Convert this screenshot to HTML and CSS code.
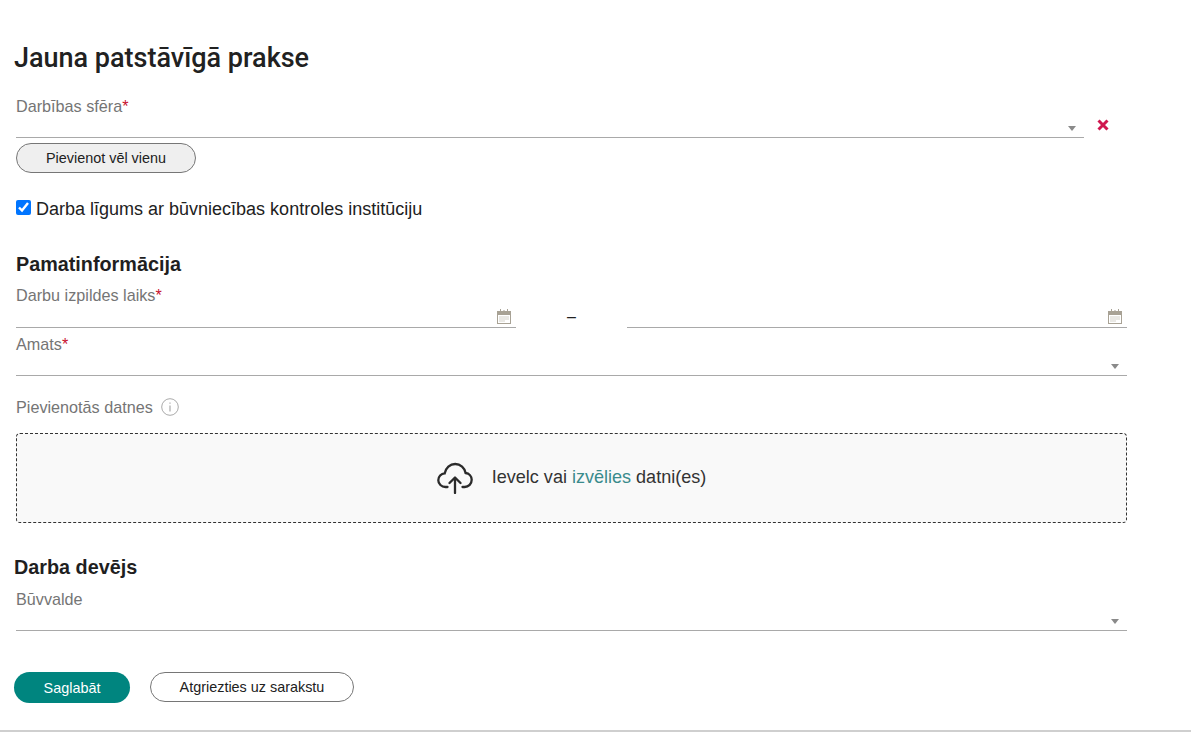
FILE: index.html
```html
<!DOCTYPE html>
<html lang="lv">
<head>
<meta charset="utf-8">
<title>Jauna patstāvīgā prakse</title>
<link rel="stylesheet" href="styles.css">
</head>
<body>
<main class="page">
  <h1 class="title">Jauna patstāvīgā prakse</h1>

  <div class="sphere-row">
    <div class="field-sphere">
      <div class="label">Darbības sfēra<span class="req">*</span></div>
      <div class="control"><span class="caret"></span></div>
    </div>
    <svg class="remove" width="12" height="12" viewBox="0 0 12 12" aria-label="Dzēst"><path d="M1.500 1.500l9 9M10.500 1.500l-9 9" stroke="#d0174f" stroke-width="3" fill="none"/></svg>
  </div>
  <button class="btn btn-add" type="button">Pievienot vēl vienu</button>

  <label class="check-row"><input class="check" type="checkbox" checked><span>Darba līgums ar būvniecības kontroles institūciju</span></label>

  <h2 class="section section-basic">Pamatinformācija</h2>
  <div class="label label-dates">Darbu izpildes laiks<span class="req">*</span></div>
  <div class="dates">
    <div class="control date-from">
      <svg class="cal" width="14" height="15" viewBox="0 0 14 15"><path d="M3 0h1v3H3zM10 0h1v3h-1zM6.500 1h1v2h-1z" fill="#a8a295"/><path d="M0 2h14v13H0z" fill="#a8a295"/><path d="M1 6h12v8H1z" fill="#fff"/><path d="M2.500 7.500h1v1h-1zM4.500 7.500h1v1h-1zM6.500 7.500h1v1h-1zM8.500 7.500h1v1h-1zM10.500 7.500h1v1h-1zM2.500 9.500h1v1h-1zM4.500 9.500h1v1h-1zM6.500 9.500h1v1h-1zM8.500 9.500h1v1h-1zM10.500 9.500h1v1h-1zM2.500 11.500h1v1h-1zM4.500 11.500h1v1h-1zM6.500 11.500h1v1h-1z" fill="#a8a295"/></svg>
    </div>
    <span class="dash">–</span>
    <div class="control date-to">
      <svg class="cal" width="14" height="15" viewBox="0 0 14 15"><path d="M3 0h1v3H3zM10 0h1v3h-1zM6.500 1h1v2h-1z" fill="#a8a295"/><path d="M0 2h14v13H0z" fill="#a8a295"/><path d="M1 6h12v8H1z" fill="#fff"/><path d="M2.500 7.500h1v1h-1zM4.500 7.500h1v1h-1zM6.500 7.500h1v1h-1zM8.500 7.500h1v1h-1zM10.500 7.500h1v1h-1zM2.500 9.500h1v1h-1zM4.500 9.500h1v1h-1zM6.500 9.500h1v1h-1zM8.500 9.500h1v1h-1zM10.500 9.500h1v1h-1zM2.500 11.500h1v1h-1zM4.500 11.500h1v1h-1zM6.500 11.500h1v1h-1z" fill="#a8a295"/></svg>
    </div>
  </div>
  <div class="label label-amats">Amats<span class="req">*</span></div>
  <div class="control"><span class="caret"></span></div>

  <div class="label label-files">Pievienotās datnes
    <svg class="info" width="18" height="18" viewBox="0 0 18 18"><circle cx="9" cy="9" r="8.300" fill="none" stroke="#aaa" stroke-width="1"/><path d="M9 4.400v1.400M9 7.600v6" stroke="#aaa" stroke-width="1.200" fill="none"/></svg>
  </div>
  <div class="drop">
    <svg class="cloud" width="36" height="32" viewBox="0 0 36 32"><path d="M10.500 25H8.500C4.500 25 1.300 22 1.300 18.200c0-3.600 2.800-6.500 6.400-6.800C8.700 6 13 2 18.200 2c5.200 0 9.600 3.900 10.400 9 3.500.4 6.100 3.300 6.100 6.800 0 3.900-3.100 7.200-7 7.200h-2.200" fill="none" stroke="#2b2b2b" stroke-width="2.300" stroke-linecap="round"/><path d="M18 31V16M12.500 21l5.500-5.500 5.500 5.500" fill="none" stroke="#2b2b2b" stroke-width="2.300" stroke-linecap="round" stroke-linejoin="round"/></svg>
    <span class="drop-text">Ievelc vai <span class="link">izvēlies</span> datni(es)</span>
  </div>

  <h2 class="section section-employer">Darba devējs</h2>
  <div class="label label-buvvalde">Būvvalde</div>
  <div class="control"><span class="caret"></span></div>

  <div class="actions">
    <button class="btn btn-save" type="button">Saglabāt</button>
    <button class="btn btn-back" type="button">Atgriezties uz sarakstu</button>
  </div>
</main>
</body>
</html>
```
FILE: styles.css
```css
* { box-sizing: border-box; }
html, body { margin: 0; padding: 0; background: #fff; }
body { font-family: "Liberation Sans", Arial, sans-serif; color: #212121; overflow: hidden; }
.page { height: 732px; padding: 42px 64px 0 16px; border-bottom: 2px solid #cfcfcf; }
.title { margin: 0 0 0 -2px; font: 500 27px/32px Roboto, sans-serif; color: #212121; }
.sphere-row { display: flex; align-items: flex-end; margin-top: 22px; }
.field-sphere { width: 1068px; }
.label { font-size: 16.200px; line-height: 20px; color: #757575; }
.req { color: #c8102e; }
.control { position: relative; height: 22px; border-bottom: 1px solid #a9a9a9; }
.caret { position: absolute; right: 8px; bottom: 6px; width: 0; height: 0; border-left: 4.500px solid transparent; border-right: 4.500px solid transparent; border-top: 5px solid #8a8a8a; }
.remove { margin: 0 0 7px 13px; }
.btn { display: block; height: 30px; border-radius: 15px; font-family: "Liberation Sans", Arial, sans-serif; font-size: 14.400px; color: #212121; padding: 0; }
.btn-add { width: 180px; margin-top: 5px; background: #efefef; border: 1px solid #767676; }
.check-row { display: flex; align-items: center; gap: 5px; margin-top: 25px; font-size: 18px; line-height: 22px; color: #212121; }
.check { width: 15px; height: 15px; margin: 0 0 4px; accent-color: #0075ff; }
.section { margin: 0; font-size: 19.800px; line-height: 24px; font-weight: 700; color: #1f1f1f; }
.section-basic { margin-top: 32px; }
.label-dates { margin-top: 9px; }
.dates { display: flex; align-items: flex-end; height: 23px; }
.dates .control { height: 23px; }
.date-from { width: 500px; }
.date-to { width: 500px; }
.dash { width: 111px; text-align: center; font-size: 16px; line-height: 22px; color: #212121; }
.cal { position: absolute; right: 5px; bottom: 3px; }
.label-amats { margin-top: 6px; }
.label-files { display: flex; align-items: center; gap: 8px; margin-top: 21px; }
.drop { display: flex; align-items: center; justify-content: center; gap: 19px; height: 90px; margin-top: 16px; background: #f9f9f9; border: 1px dashed #333; border-radius: 4px; }
.drop-text { font-size: 18.050px; color: #333; padding-bottom: 2px; }
.link { color: #3a8b8c; }
.section-employer { margin: 32px 0 0 -2px; }
.label-buvvalde { margin-top: 10px; }
.actions { display: flex; align-items: flex-start; gap: 20px; margin: 41px 0 0 -2px; }
.btn-save { width: 116px; height: 31px; background: #00857f; border: 0; color: #fff; border-radius: 16px; }
.btn-back { width: 204px; background: #fff; border: 1px solid #767676; }
```
